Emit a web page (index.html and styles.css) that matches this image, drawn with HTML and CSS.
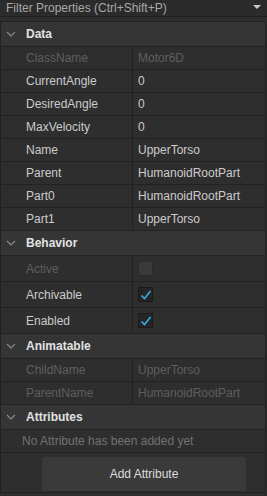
FILE: index.html
```html
<!DOCTYPE html>
<html>
<head>
	<meta charset="utf-8" />
	<title>Properties</title>
	<link rel="stylesheet" href="styles.css">
</head>
<body>
<div class="filter">
	<span>Filter Properties (Ctrl+Shift+P)</span>
	<span class="drop"></span>
</div>
<div class="panel">
	<div class="head"><svg class="chev" width="10" height="6" viewBox="0 0 10 6"><path d="M1 1 L5 5 L9 1" fill="none" stroke="#8a8a8a" stroke-width="1.2"/></svg>Data</div>
	<div class="row off"><span class="key">ClassName</span><span class="val">Motor6D</span></div>
	<div class="row"><span class="key">CurrentAngle</span><span class="val">0</span></div>
	<div class="row"><span class="key">DesiredAngle</span><span class="val">0</span></div>
	<div class="row"><span class="key">MaxVelocity</span><span class="val">0</span></div>
	<div class="row"><span class="key">Name</span><span class="val">UpperTorso</span></div>
	<div class="row"><span class="key">Parent</span><span class="val">HumanoidRootPart</span></div>
	<div class="row"><span class="key">Part0</span><span class="val">HumanoidRootPart</span></div>
	<div class="row"><span class="key">Part1</span><span class="val">UpperTorso</span></div>

	<div class="head"><svg class="chev" width="10" height="6" viewBox="0 0 10 6"><path d="M1 1 L5 5 L9 1" fill="none" stroke="#8a8a8a" stroke-width="1.2"/></svg>Behavior</div>
	<div class="row tall off"><span class="key">Active</span><span class="val"><span class="box"></span></span></div>
	<div class="row tall"><span class="key">Archivable</span><span class="val"><span class="box"><svg width="12" height="12" viewBox="0 0 12 12"><path d="M1.5 6.5 L4.5 9.5 L10.5 2" fill="none" stroke="#3aa8f0" stroke-width="1.6"/></svg></span></span></div>
	<div class="row tall"><span class="key">Enabled</span><span class="val"><span class="box"><svg width="12" height="12" viewBox="0 0 12 12"><path d="M1.5 6.5 L4.5 9.5 L10.5 2" fill="none" stroke="#3aa8f0" stroke-width="1.6"/></svg></span></span></div>

	<div class="head"><svg class="chev" width="10" height="6" viewBox="0 0 10 6"><path d="M1 1 L5 5 L9 1" fill="none" stroke="#8a8a8a" stroke-width="1.2"/></svg>Animatable</div>
	<div class="row off"><span class="key">ChildName</span><span class="val">UpperTorso</span></div>
	<div class="row off"><span class="key">ParentName</span><span class="val">HumanoidRootPart</span></div>

	<div class="head"><svg class="chev" width="10" height="6" viewBox="0 0 10 6"><path d="M1 1 L5 5 L9 1" fill="none" stroke="#8a8a8a" stroke-width="1.2"/></svg>Attributes</div>
	<div class="note">No Attribute has been added yet</div>
	<div class="btnrow"><div class="btn">Add Attribute</div></div>
</div>
</body>
</html>
```
FILE: styles.css
```css
* {
	margin: 0;
	padding: 0;
	box-sizing: border-box;
}
body {
	background: #2e2e2e;
	font-family: "Liberation Sans", Arial, sans-serif;
	font-size: 12px;
	color: #cccccc;
	width: 267px;
	height: 496px;
	overflow: hidden;
}
.filter {
	height: 17px;
	background: #2b2b2b;
	border-bottom: 1px solid #1f1f1f;
	display: flex;
	align-items: center;
	justify-content: space-between;
	padding: 0 6px 0 6px;
	color: #a8a8a8;
}
.filter .drop {
	width: 0;
	height: 0;
	border-left: 4px solid transparent;
	border-right: 4px solid transparent;
	border-top: 4px solid #c8c8c8;
	margin-bottom: 3px;
}
.panel {
	margin-top: 4px;
	margin-right: 1px;
	border-top: 1px solid #222222;
	border-left: 1px solid #222222;
	border-right: 1px solid #222222;
}
.head {
	height: 25px;
	background: #353535;
	border-bottom: 1px solid #222222;
	display: flex;
	align-items: center;
	font-weight: bold;
	color: #e2e2e2;
	padding-left: 5px;
}
.chev {
	margin-right: 10px;
}
.row {
	height: 23px;
	border-bottom: 1px solid #222222;
	display: flex;
	align-items: center;
}
.row.tall {
	height: 26px;
}
.key {
	width: 132px;
	height: 100%;
	display: flex;
	align-items: center;
	padding-left: 25px;
	border-right: 1px solid #222222;
}
.val {
	padding-left: 5px;
	display: flex;
	align-items: center;
}
.off {
	color: #5e5e5e;
}
.box {
	width: 15px;
	height: 15px;
	background: #252525;
	border: 1px solid #1a1a1a;
	display: flex;
	align-items: center;
	justify-content: center;
}
.off .box {
	background: #3a3a3a;
	border-color: #2a2a2a;
}
.note {
	height: 23px;
	border-bottom: 1px solid #222222;
	display: flex;
	align-items: center;
	padding-left: 21px;
	color: #727272;
}
.btnrow {
	height: 40px;
	border-bottom: 1px solid #222222;
	padding: 4px 0 0 41px;
}
.btn {
	width: 204px;
	height: 34px;
	background: #3a3a3a;
	border-radius: 3px;
	display: flex;
	align-items: center;
	justify-content: center;
	color: #dddddd;
}
```
